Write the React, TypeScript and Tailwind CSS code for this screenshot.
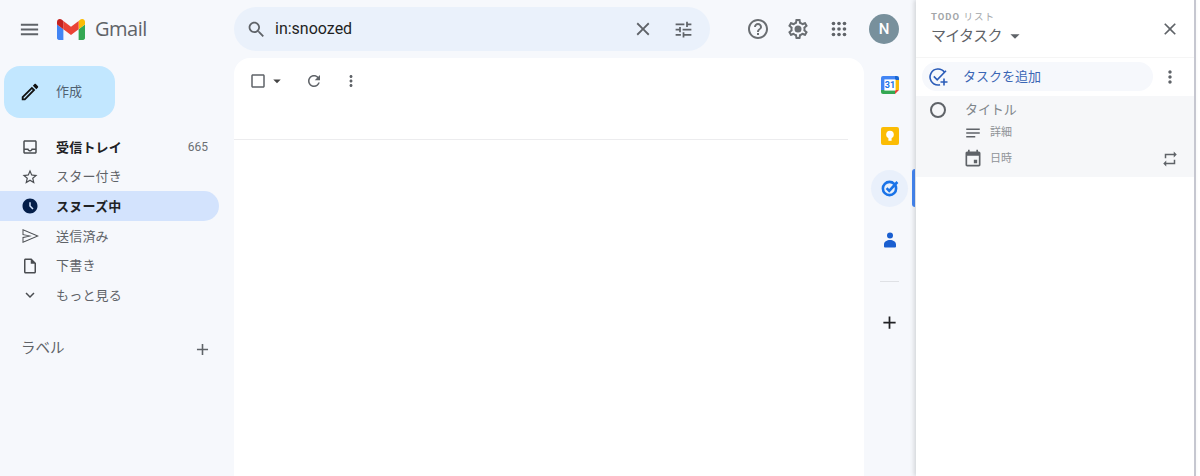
import React from 'react'

const paths = {
  menu: 'M3 18h18v-2H3v2zm0-5h18v-2H3v2zm0-7v2h18V6H3z',
  search: 'M15.5 14h-.79l-.28-.27C15.41 12.59 16 11.11 16 9.5 16 5.91 13.09 3 9.5 3S3 5.91 3 9.5 5.91 16 9.5 16c1.61 0 3.09-.59 4.23-1.57l.27.28v.79l5 4.99L20.49 19l-4.99-5zm-6 0C7.01 14 5 11.99 5 9.5S7.01 5 9.5 5 14 7.01 14 9.5 11.99 14 9.5 14z',
  close: 'M19 6.41L17.59 5 12 10.59 6.41 5 5 6.41 10.59 12 5 17.59 6.41 19 12 13.41 17.59 19 19 17.59 13.41 12z',
  tune: 'M3 17v2h6v-2H3zM3 5v2h10V5H3zm10 16v-2h8v-2h-8v-2h-2v6h2zM7 9v2H3v2h4v2h2V9H7zm14 4v-2H11v2h10zm-6-4h2V7h4V5h-4V3h-2v6z',
  help: 'M11 18h2v-2h-2v2zm1-16C6.48 2 2 6.48 2 12s4.48 10 10 10 10-4.48 10-10S17.52 2 12 2zm0 18c-4.41 0-8-3.59-8-8s3.59-8 8-8 8 3.59 8 8-3.59 8-8 8zm0-14c-2.21 0-4 1.79-4 4h2c0-1.1.9-2 2-2s2 .9 2 2c0 2-3 1.75-3 5h2c0-2.25 3-2.5 3-5 0-2.21-1.79-4-4-4z',
  settings: 'M19.43 12.98c.04-.32.07-.64.07-.98 0-.34-.03-.66-.07-.98l2.11-1.65c.19-.15.24-.42.12-.64l-2-3.46c-.09-.16-.26-.25-.44-.25-.06 0-.12.01-.17.03l-2.49 1c-.52-.4-1.08-.73-1.69-.98l-.38-2.65C14.46 2.18 14.25 2 14 2h-4c-.25 0-.46.18-.49.42l-.38 2.65c-.61.25-1.17.59-1.69.98l-2.49-1c-.06-.02-.12-.03-.18-.03-.17 0-.34.09-.43.25l-2 3.46c-.13.22-.07.49.12.64l2.11 1.65c-.04.32-.07.65-.07.98 0 .33.03.66.07.98l-2.11 1.65c-.19.15-.24.42-.12.64l2 3.46c.09.16.26.25.44.25.06 0 .12-.01.17-.03l2.49-1c.52.4 1.08.73 1.69.98l.38 2.65c.03.24.24.42.49.42h4c.25 0 .46-.18.49-.42l.38-2.65c.61-.25 1.17-.59 1.69-.98l2.49 1c.06.02.12.03.18.03.17 0 .34-.09.43-.25l2-3.46c.12-.22.07-.49-.12-.64l-2.11-1.65zm-1.98-1.71c.04.31.05.52.05.73 0 .21-.02.43-.05.73l-.14 1.13.89.7 1.08.84-.7 1.21-1.27-.51-1.04-.42-.9.68c-.43.32-.84.56-1.25.73l-1.06.43-.16 1.13-.2 1.35h-1.4l-.19-1.35-.16-1.13-1.06-.43c-.43-.18-.83-.41-1.23-.71l-.91-.7-1.06.43-1.27.51-.7-1.21 1.08-.84.89-.7-.14-1.13c-.03-.31-.05-.54-.05-.74s.02-.43.05-.73l.14-1.13-.89-.7-1.08-.84.7-1.21 1.27.51 1.04.42.9-.68c.43-.32.84-.56 1.25-.73l1.06-.43.16-1.13.2-1.35h1.39l.19 1.35.16 1.13 1.06.43c.43.18.83.41 1.23.71l.91.7 1.06-.43 1.27-.51.7 1.21-1.07.85-.89.7.14 1.13zM12 8.5a3.5 3.5 0 1 0 0 7 3.5 3.5 0 0 0 0-7z',
  edit: 'M14.06 9.02l.92.92L5.92 19H5v-.92l9.06-9.06M17.66 3c-.25 0-.51.1-.7.29l-1.83 1.83 3.75 3.75 1.83-1.83c.39-.39.39-1.02 0-1.41l-2.34-2.34c-.2-.2-.45-.29-.71-.29zm-3.6 3.19L3 17.25V21h3.75L17.81 9.94l-3.75-3.75z',
  inbox: 'M19 3H5c-1.1 0-2 .9-2 2v14c0 1.1.9 2 2 2h14c1.1 0 2-.9 2-2V5c0-1.1-.9-2-2-2zm0 16H5v-3h3.56c.69 1.19 1.97 2 3.44 2s2.75-.81 3.44-2H19v3zm0-5h-4.99c0 1.1-.9 2-2 2s-2-.9-2-2H5V5h14v9z',
  star: 'M22 9.24l-7.19-.62L12 2 9.19 8.63 2 9.24l5.46 4.73L5.82 21 12 17.27 18.18 21l-1.63-7.03L22 9.24zM12 15.4l-3.76 2.27 1-4.28-3.32-2.88 4.38-.38L12 6.1l1.71 4.04 4.38.38-3.32 2.88 1 4.28L12 15.4z',
  watch: 'M11.99 2C6.47 2 2 6.48 2 12s4.47 10 9.99 10C17.52 22 22 17.52 22 12S17.52 2 11.99 2zm3.3 14.71L11 12.41V7h2v4.59l3.71 3.71-1.42 1.41z',
  send: 'M3.3 4.6v4.9L14.6 12 3.3 14.5v4.9L20.6 12 3.3 4.6zM2 2.6L24 12 2 21.4v-8l8-1.4-8-1.4v-8z',
  draft: 'M14 2H6c-1.1 0-1.99.9-1.99 2L4 20c0 1.1.89 2 1.99 2H18c1.1 0 2-.9 2-2V8l-6-6zM6 20V4h7v5h5v11H6z',
  expand: 'M16.59 8.59L12 13.17 7.41 8.59 6 10l6 6 6-6z',
  add: 'M19 13h-6v6h-2v-6H5v-2h6V5h2v6h6v2z',
  checkbox: 'M19 5v14H5V5h14m0-2H5c-1.1 0-2 .9-2 2v14c0 1.1.9 2 2 2h14c1.1 0 2-.9 2-2V5c0-1.1-.9-2-2-2z',
  caret: 'M7 10l5 5 5-5z',
  refresh: 'M17.65 6.35C16.2 4.9 14.21 4 12 4c-4.42 0-7.99 3.58-7.99 8s3.57 8 7.99 8c3.73 0 6.84-2.55 7.73-6h-2.08c-.82 2.33-3.04 4-5.65 4-3.31 0-6-2.69-6-6s2.69-6 6-6c1.66 0 3.14.69 4.22 1.78L13 11h7V4l-2.35 2.35z',
  more: 'M12 8c1.1 0 2-.9 2-2s-.9-2-2-2-2 .9-2 2 .9 2 2 2zm0 2c-1.1 0-2 .9-2 2s.9 2 2 2 2-.9 2-2-.9-2-2-2zm0 6c-1.1 0-2 .9-2 2s.9 2 2 2 2-.9 2-2-.9-2-2-2z',
  notes: 'M3 18h12v-2H3v2zM3 6v2h18V6H3zm0 7h18v-2H3v2z',
  event: 'M17 13h-4v4h4v-4zM16 1v2H8V1H6v2H5c-1.11 0-1.99.9-1.99 2L3 19c0 1.1.89 2 2 2h14c1.1 0 2-.9 2-2V5c0-1.1-.9-2-2-2h-1V1h-2zm3 18H5V8h14v11z',
  repeat: 'M7 7h10v3l4-4-4-4v3H5v6h2V7zm10 10H7v-3l-4 4 4 4v-3h12v-6h-2v4z',
}

const Icon = ({ name, className }: { name: keyof typeof paths; className: string }) => (
  <svg viewBox="0 0 24 24" fill="currentColor" className={className}>
    <path d={paths[name]} fillRule="evenodd" />
  </svg>
)

const AppsIcon = () => (
  <svg viewBox="0 0 24 24" fill="currentColor" className="w-[22px] h-[22px] text-[#5f6368]">
    {[6, 12, 18].map((y) =>
      [6, 12, 18].map((x) => <circle key={`${x}-${y}`} cx={x} cy={y} r="2" />),
    )}
  </svg>
)

const GmailLogo = () => (
  <svg viewBox="52 42 88 66" className="w-[28px] h-[21px]">
    <path fill="#4285f4" d="M58 108h14V74L52 59v43c0 3.32 2.69 6 6 6" />
    <path fill="#34a853" d="M120 108h14c3.32 0 6-2.69 6-6V59l-20 15" />
    <path fill="#fbbc04" d="M120 48v26l20-15v-8c0-7.42-8.47-11.65-14.4-7.2" />
    <path fill="#ea4335" d="M72 74V48l24 18 24-18v26L96 92" />
    <path fill="#c5221f" d="M52 51v8l20 15V48l-5.6-4.2c-5.94-4.45-14.4-.22-14.4 7.2" />
  </svg>
)

const CalendarLogo = () => (
  <svg viewBox="0 0 18 18" className="w-[18px] h-[18px]">
    <path fill="#4285f4" d="M2 0h12v4H4v10H0V2a2 2 0 0 1 2-2z" />
    <path fill="#fbbc04" d="M14 4h4v10h-4z" />
    <path fill="#34a853" d="M0 14h14v4H2a2 2 0 0 1-2-2z" />
    <path fill="#ea4335" d="M14 14h4l-4 4z" />
    <path fill="#1967d2" d="M14 0h2a2 2 0 0 1 2 2v2h-4z" />
    <path fill="#fff" d="M3.4 3.4h11.2v11.2H3.4z" />
    <text x="9" y="12.4" textAnchor="middle" className="text-[9px] font-bold fill-[#1a73e8] font-['Roboto',sans-serif]">31</text>
  </svg>
)

const KeepLogo = () => (
  <svg viewBox="0 0 18 18" className="w-[18px] h-[18px]">
    <rect width="18" height="18" rx="2" fill="#fbbc04" />
    <circle cx="9" cy="7.6" r="3.8" fill="#fff" />
    <rect x="7.4" y="10" width="3.2" height="3.8" fill="#fff" />
  </svg>
)

const TasksLogo = () => (
  <svg viewBox="0 0 18 18" className="w-[18px] h-[18px]">
    <circle cx="8.5" cy="9.5" r="6.6" fill="none" stroke="#1a73e8" strokeWidth="2.6" />
    <path d="M5.6 9.2l2.6 2.6L16.4 3" fill="none" stroke="#1a73e8" strokeWidth="2.6" />
  </svg>
)

const ContactsLogo = () => (
  <svg viewBox="0 0 18 18" className="w-[18px] h-[18px]">
    <circle cx="9" cy="3.6" r="3" fill="#1a5fd0" />
    <path fill="#1a5fd0" d="M3 14.6v-2.2C3 9.6 6 8 9 8s6 1.6 6 4.4v2.2a1 1 0 0 1-1 1H4a1 1 0 0 1-1-1z" />
  </svg>
)

const AddTaskIcon = () => (
  <svg viewBox="0 0 20 20" fill="none" stroke="#2b5cb8" strokeWidth="1.6" className="w-[20px] h-[20px]">
    <path d="M16.6 5.4A8 8 0 1 0 10 18c.8 0 1.4-.1 2-.3" />
    <path d="M5.8 9.4l3.4 3.4L18 3.8" />
    <path d="M16 11.5v7M12.5 15h7" />
  </svg>
)

const navItems: { icon: keyof typeof paths; label: string; count?: string; bold?: boolean; active?: boolean }[] = [
  { icon: 'inbox', label: '受信トレイ', count: '665', bold: true },
  { icon: 'star', label: 'スター付き' },
  { icon: 'watch', label: 'スヌーズ中', bold: true, active: true },
  { icon: 'send', label: '送信済み' },
  { icon: 'draft', label: '下書き' },
  { icon: 'expand', label: 'もっと見る' },
]

const Sidebar = () => (
  <div className="w-[234px] shrink-0 flex flex-col">
    <div className="ml-1 mt-2 w-[111px] h-[52px] rounded-2xl bg-[#c2e7ff] flex items-center pl-[15px]">
      <Icon name="edit" className="w-[22px] h-[22px] text-[#111]" />
      <span className="ml-[15px] text-[13px] text-[#50606f]">作成</span>
    </div>
    <div className="mt-[14px] w-[219px] flex flex-col">
      {navItems.map((item) => (
        <div
          key={item.label}
          className={`h-[29.7px] flex items-center pl-[21px] pr-[11px] rounded-r-full ${item.active ? 'bg-[#d3e3fd] text-[#041e49]' : 'text-[#5f6368]'}`}
        >
          <Icon name={item.icon} className={`w-[18px] h-[18px] ${item.active ? 'text-[#041e49]' : 'text-[#4a4d51]'}`} />
          <span className={`ml-[17px] pt-px text-[13px] tracking-[0.2px] ${item.bold ? 'font-bold text-[#202124]' : ''}`}>{item.label}</span>
          {item.count && <span className="ml-auto text-[12px] text-[#6b6f73]">{item.count}</span>}
        </div>
      ))}
    </div>
    <div className="mt-[28px] pl-[21px] pr-[7px] w-[219px] flex items-center justify-between text-[#5f6368]">
      <span className="text-[14.5px]">ラベル</span>
      <Icon name="add" className="w-[19px] h-[19px]" />
    </div>
  </div>
)

const MainCard = () => (
  <div className="w-[630px] shrink-0 bg-white rounded-t-2xl">
    <div className="h-[82px] pr-4">
      <div className="h-[82px] border-b border-[#ececee] flex items-start pt-[14px] pl-[15px] text-[#5f6368]">
        <Icon name="checkbox" className="w-[18px] h-[18px]" />
        <Icon name="caret" className="w-[18px] h-[18px] ml-[1px] text-[#444]" />
        <Icon name="refresh" className="w-[18px] h-[18px] ml-[19px]" />
        <Icon name="more" className="w-[18px] h-[18px] ml-[19px]" />
      </div>
    </div>
  </div>
)

const SideStrip = () => (
  <div className="w-[51px] shrink-0 flex flex-col">
    <div className="h-[52px] flex items-center justify-center pt-[1px]">
      <CalendarLogo />
    </div>
    <div className="h-[52px] flex items-center justify-center">
      <KeepLogo />
    </div>
    <div className="relative h-[52px] flex items-center justify-center">
      <div className="w-[37px] h-[37px] rounded-full bg-[#e9f0fb] flex items-center justify-center">
        <TasksLogo />
      </div>
      <div className="absolute right-0 top-[7px] w-[3px] h-[38px] rounded-l bg-[#4285f4]" />
    </div>
    <div className="h-[52px] flex items-center justify-center pt-[2px]">
      <ContactsLogo />
    </div>
    <div className="mt-[15px] mx-[16px] h-px bg-[#dfe1e5]" />
    <div className="mt-[30px] flex justify-center">
      <Icon name="add" className="w-[21px] h-[21px] text-[#202124]" />
    </div>
  </div>
)

const TasksPanel = () => (
  <div className="relative z-10 w-[280px] shrink-0 bg-white border-r-2 border-[#c6c7d0] shadow-[-2px_0_4px_rgba(60,64,67,0.18)] flex flex-col">
    <div className="h-[58px] border-b border-[#f5f5f5] flex items-start justify-between pl-[15px] pr-[14px]">
      <div className="pt-[10px]">
        <div className="text-[9.5px] leading-[13px] font-bold tracking-[1px] text-[#a3a6a9]">
          TODO <span className="font-normal">リスト</span>
        </div>
        <div className="mt-[2px] flex items-center text-[#5f6368]">
          <span className="text-[15px] leading-[22px] tracking-[-0.7px]">マイタスク</span>
          <Icon name="caret" className="w-[22px] h-[22px] ml-[2px]" />
        </div>
      </div>
      <Icon name="close" className="mt-[19px] w-[20px] h-[20px] text-[#5f6368]" />
    </div>
    <div className="h-[38px] shrink-0 flex items-center pb-[1px] pl-[6px] pr-[14px]">
      <div className="w-[231px] h-[29px] rounded-full bg-[#f6f8fc] flex items-center pl-[6px]">
        <AddTaskIcon />
        <span className="ml-[15px] text-[13px] text-[#3b66b5]">タスクを追加</span>
      </div>
      <Icon name="more" className="ml-auto w-[20px] h-[20px] text-[#5f6368]" />
    </div>
    <div className="h-[81px] bg-[#f6f7f9] pl-[14px] pr-[14px] flex flex-col">
      <div className="h-[28px] flex items-center">
        <span className="w-[16px] h-[16px] rounded-full border-2 border-[#5f6368]" />
        <span className="ml-[19px] text-[13px] tracking-[-0.1px] text-[#80868b]">タイトル</span>
      </div>
      <div className="h-[18px] flex items-center pl-[34px] text-[#5f6368]">
        <Icon name="notes" className="w-[18px] h-[18px]" />
        <span className="ml-[8px] text-[11px] text-[#8f9397]">詳細</span>
      </div>
      <div className="h-[34px] flex items-center pl-[33px] text-[#5f6368]">
        <Icon name="event" className="w-[20px] h-[20px]" />
        <span className="ml-[7px] text-[11px] text-[#8f9397]">日時</span>
        <Icon name="repeat" className="ml-auto w-[18px] h-[18px] mr-[1px]" />
      </div>
    </div>
  </div>
)

const App = () => (
  <div className="h-screen w-full overflow-hidden bg-white flex font-['Roboto','Noto_Sans_CJK_JP',sans-serif]">
    <div className="w-[916px] shrink-0 bg-[#f6f8fc] flex flex-col">
      <header className="h-[58px] shrink-0 flex items-center">
        <Icon name="menu" className="ml-[18px] w-[23px] h-[23px] text-[#5f6368]" />
        <div className="ml-[16px]">
          <GmailLogo />
        </div>
        <span className="ml-[10px] w-[139px] text-[20px] text-[#5f6368] font-['Open_Sans',sans-serif] tracking-[-0.5px]">Gmail</span>
        <div className="w-[476px] h-[44px] rounded-full bg-[#eaf1fb] flex items-center pl-[12px] pr-[16px]">
          <Icon name="search" className="w-[21px] h-[21px] text-[#5f6368]" />
          <span className="ml-[8px] text-[16px] text-[#1f1f1f]">in:snoozed</span>
          <Icon name="close" className="ml-auto w-[22px] h-[22px] text-[#5f6368]" />
          <Icon name="tune" className="ml-[19px] w-[21px] h-[21px] text-[#5f6368]" />
        </div>
        <Icon name="help" className="ml-[36px] w-[24px] h-[24px] text-[#6a6e72]" />
        <Icon name="settings" className="ml-[16px] w-[24px] h-[24px] text-[#6a6e72]" />
        <div className="ml-[18px]">
          <AppsIcon />
        </div>
        <div className="ml-[19px] w-[30px] h-[30px] rounded-full bg-[#78909c] text-white text-[15px] font-medium flex items-center justify-center">N</div>
      </header>
      <div className="flex-1 flex">
        <Sidebar />
        <MainCard />
        <SideStrip />
      </div>
    </div>
    <TasksPanel />
  </div>
)

export default App
